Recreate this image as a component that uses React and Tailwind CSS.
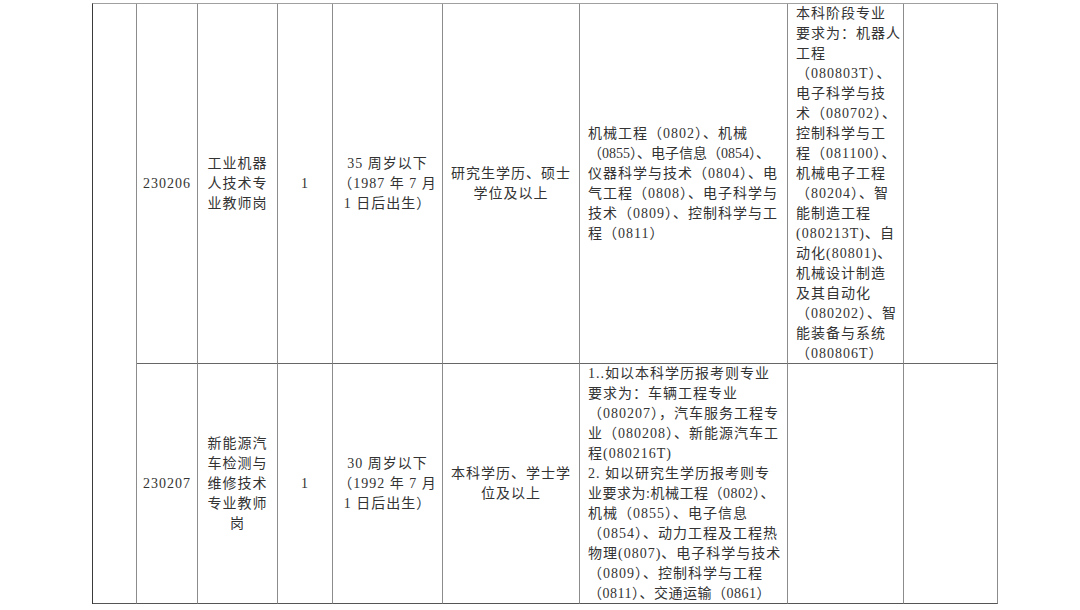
import React from "react";

function Lines({ lines, className = "" }) {
  return (
    <div className={className}>
      {lines.map((l, i) => {
        const t = typeof l === "string" ? { t: l } : l;
        return (
          <div
            key={i}
            className={
              "whitespace-nowrap " +
              (t.k === 0 ? "tracking-[0px]" : t.k === 1 ? "tracking-[0.5px]" : "")
            }
          >
            {t.t}
          </div>
        );
      })}
    </div>
  );
}

const cell = "border-r border-b border-[#8c8c8c]";
const center = "flex items-center justify-center text-center";

export default function App() {
  return (
    <div className="w-[1080px] h-[610px] bg-white overflow-hidden pt-[3px] pl-[92px] font-['Liberation_Serif','Noto_Sans_CJK_SC',serif] text-[14px] leading-[20px] tracking-[1px] text-[#333]">
      <div className="w-[906px] grid grid-cols-[44px_61px_80px_55px_110px_137px_208px_116px_94px] grid-rows-[360px_240px] border-t border-l border-t-[#a0a0a0] border-l-[#3a3a3a]">
        <div className={"row-span-2 border-r border-b border-r-[#8c8c8c] border-b-[#555]"}></div>

        {/* Row 1 */}
        <div className={cell + " " + center + " border-b-[#666]"}>230206</div>
        <div className={cell + " " + center + " border-b-[#666]"}>
          <Lines lines={["工业机器", "人技术专", "业教师岗"]} />
        </div>
        <div className={cell + " " + center + " border-b-[#666]"}>1</div>
        <div className={cell + " " + center + " border-b-[#666]"}>
          <Lines lines={["35 周岁以下", "（1987 年 7 月", "1 日后出生）"]} />
        </div>
        <div className={cell + " " + center + " border-b-[#666]"}>
          <Lines lines={["研究生学历、硕士", "学位及以上"]} />
        </div>
        <div className={cell + " flex items-center pl-[8px] border-b-[#666]"}>
          <Lines
            lines={[
              "机械工程（0802）、机械",
              { t: "（0855）、电子信息（0854）、", k: 0 },
              "仪器科学与技术（0804）、电",
              "气工程（0808）、电子科学与",
              "技术（0809）、控制科学与工",
              "程（0811）",
            ]}
          />
        </div>
        <div className={cell + " flex items-center pl-[8px] border-b-[#666]"}>
          <Lines
            lines={[
              "本科阶段专业",
              "要求为：机器人",
              "工程",
              "（080803T）、",
              "电子科学与技",
              "术（080702）、",
              "控制科学与工",
              "程（081100）、",
              "机械电子工程",
              "（80204）、智",
              "能制造工程",
              "(080213T)、自",
              "动化(80801)、",
              "机械设计制造",
              "及其自动化",
              "（080202）、智",
              "能装备与系统",
              "（080806T）",
            ]}
          />
        </div>
        <div className={cell + " border-b-[#666]"}></div>

        {/* Row 2 */}
        <div className={cell + " " + center + " border-b-[#555]"}>230207</div>
        <div className={cell + " " + center + " border-b-[#555]"}>
          <Lines lines={["新能源汽", "车检测与", "维修技术", "专业教师", "岗"]} />
        </div>
        <div className={cell + " " + center + " border-b-[#555]"}>1</div>
        <div className={cell + " " + center + " border-b-[#555]"}>
          <Lines lines={["30 周岁以下", "（1992 年 7 月", "1 日后出生）"]} />
        </div>
        <div className={cell + " " + center + " border-b-[#555]"}>
          <Lines lines={["本科学历、学士学", "位及以上"]} />
        </div>
        <div className={cell + " flex items-center pl-[8px] border-b-[#555]"}>
          <Lines
            lines={[
              "1..如以本科学历报考则专业",
              "要求为：车辆工程专业",
              "（080207），汽车服务工程专",
              "业（080208）、新能源汽车工",
              "程(080216T)",
              "2. 如以研究生学历报考则专",
              { t: "业要求为:机械工程（0802）、", k: 1 },
              "机械（0855）、电子信息",
              "（0854）、动力工程及工程热",
              "物理(0807)、电子科学与技术",
              "（0809）、控制科学与工程",
              { t: "（0811）、交通运输（0861）", k: 1 },
            ]}
          />
        </div>
        <div className={cell + " border-b-[#555]"}></div>
        <div className={cell + " border-b-[#555]"}></div>
      </div>
    </div>
  );
}
